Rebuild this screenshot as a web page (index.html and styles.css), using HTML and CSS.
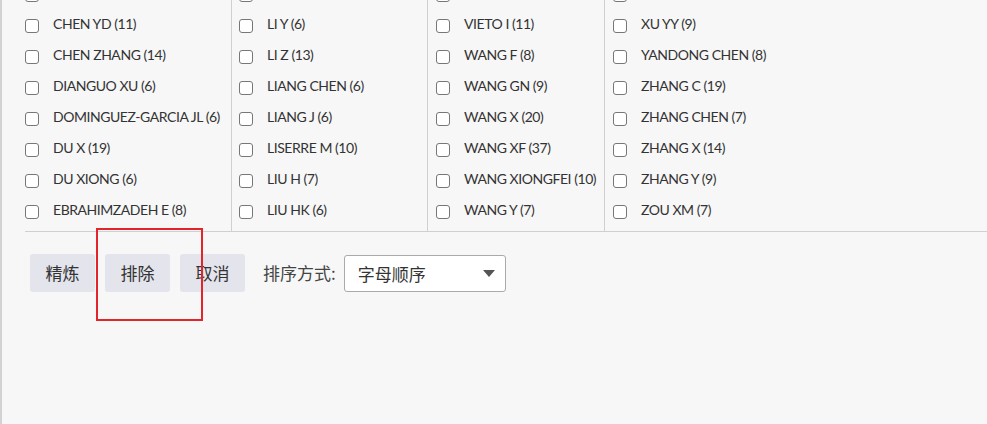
FILE: index.html
```html
<!DOCTYPE html>
<html lang="zh">
<head>
<meta charset="utf-8">
<link rel="stylesheet" href="styles.css">
</head>
<body>
<div class="panel">
  <div class="cols">
    <div class="col c1">
      <label class="row"><span class="box"></span><span class="txt">CHEN XIAO (9)</span></label>
      <label class="row"><span class="box"></span><span class="txt">CHEN YD (11)</span></label>
      <label class="row"><span class="box"></span><span class="txt">CHEN ZHANG (14)</span></label>
      <label class="row"><span class="box"></span><span class="txt">DIANGUO XU (6)</span></label>
      <label class="row"><span class="box"></span><span class="txt">DOMINGUEZ-GARCIA JL (6)</span></label>
      <label class="row"><span class="box"></span><span class="txt">DU X (19)</span></label>
      <label class="row"><span class="box"></span><span class="txt">DU XIONG (6)</span></label>
      <label class="row"><span class="box"></span><span class="txt">EBRAHIMZADEH E (8)</span></label>
    </div>
    <div class="col c2">
      <label class="row"><span class="box"></span><span class="txt">LI X (8)</span></label>
      <label class="row"><span class="box"></span><span class="txt">LI Y (6)</span></label>
      <label class="row"><span class="box"></span><span class="txt">LI Z (13)</span></label>
      <label class="row"><span class="box"></span><span class="txt">LIANG CHEN (6)</span></label>
      <label class="row"><span class="box"></span><span class="txt">LIANG J (6)</span></label>
      <label class="row"><span class="box"></span><span class="txt">LISERRE M (10)</span></label>
      <label class="row"><span class="box"></span><span class="txt">LIU H (7)</span></label>
      <label class="row"><span class="box"></span><span class="txt">LIU HK (6)</span></label>
    </div>
    <div class="col c3">
      <label class="row"><span class="box"></span><span class="txt">TEODORESCU R (12)</span></label>
      <label class="row"><span class="box"></span><span class="txt">VIETO I (11)</span></label>
      <label class="row"><span class="box"></span><span class="txt">WANG F (8)</span></label>
      <label class="row"><span class="box"></span><span class="txt">WANG GN (9)</span></label>
      <label class="row"><span class="box"></span><span class="txt">WANG X (20)</span></label>
      <label class="row"><span class="box"></span><span class="txt">WANG XF (37)</span></label>
      <label class="row"><span class="box"></span><span class="txt">WANG XIONGFEI (10)</span></label>
      <label class="row"><span class="box"></span><span class="txt">WANG Y (7)</span></label>
    </div>
    <div class="col c4">
      <label class="row"><span class="box"></span><span class="txt">XU DIANGUO (7)</span></label>
      <label class="row"><span class="box"></span><span class="txt">XU YY (9)</span></label>
      <label class="row"><span class="box"></span><span class="txt">YANDONG CHEN (8)</span></label>
      <label class="row"><span class="box"></span><span class="txt">ZHANG C (19)</span></label>
      <label class="row"><span class="box"></span><span class="txt">ZHANG CHEN (7)</span></label>
      <label class="row"><span class="box"></span><span class="txt">ZHANG X (14)</span></label>
      <label class="row"><span class="box"></span><span class="txt">ZHANG Y (9)</span></label>
      <label class="row"><span class="box"></span><span class="txt">ZOU XM (7)</span></label>
    </div>
  </div>
  <div class="actions">
    <button class="btn">精炼</button>
    <button class="btn">排除</button>
    <button class="btn">取消</button>
    <span class="sortlabel">排序方式:</span>
    <div class="select"><span>字母顺序</span><span class="caret"></span></div>
  </div>
</div>
<div class="highlight"></div>
</body>
</html>
```

FILE: styles.css
```css
html, body {
  margin: 0;
  padding: 0;
  height: 100%;
  overflow: hidden;
  background: #f7f7f7;
}
body {
  font-family: "Lato", "Noto Sans CJK SC", sans-serif;
  color: #333;
  position: relative;
  box-sizing: border-box;
  border-left: 2px solid #d2d2d2;
}
.panel {
  padding-left: 23px;
}
.cols {
  display: flex;
  margin-top: -21px;
  height: 252px;
  border-bottom: 1px solid #d0d0d0;
}
.col {
  box-sizing: border-box;
  height: 100%;
}
.c1 { width: 206px; }
.c2 { width: 196px; border-left: 1px solid #d0d0d0; padding-left: 7px; }
.c3 { width: 177px; border-left: 1px solid #d0d0d0; padding-left: 8px; }
.c4 { border-left: 1px solid #d0d0d0; padding-left: 8px; flex: 1; }
.row {
  display: flex;
  align-items: flex-start;
  height: 31px;
  gap: 14px;
}
.box {
  width: 14px;
  height: 14px;
  box-sizing: border-box;
  border: 1px solid #777;
  border-radius: 3px;
  background: #fff;
  margin-top: 9px;
  flex: none;
}
.txt {
  font-size: 14px;
  line-height: 28px;
  letter-spacing: -0.45px;
  white-space: nowrap;
}
.actions {
  display: flex;
  align-items: center;
  padding-left: 5px;
  margin-top: 21px;
}
.btn {
  font-family: "Noto Sans CJK SC", sans-serif;
  font-size: 17px;
  color: #333;
  width: 65px;
  height: 38px;
  border: none;
  border-radius: 3px;
  background: #e3e4ec;
  margin-right: 10px;
  padding: 0;
}
.sortlabel {
  font-family: "Noto Sans CJK SC", sans-serif;
  font-size: 17px;
  color: #444;
  margin-left: 8px;
  margin-right: 8px;
}
.select {
  box-sizing: border-box;
  width: 162px;
  height: 37px;
  margin-top: 2px;
  background: #fff;
  border: 1px solid #aaa;
  border-radius: 3px;
  display: flex;
  align-items: center;
  justify-content: space-between;
  padding: 0 10px 0 13px;
  font-family: "Noto Sans CJK SC", sans-serif;
  font-size: 17px;
}
.caret {
  width: 0;
  height: 0;
  border-left: 6.5px solid transparent;
  border-right: 6.5px solid transparent;
  border-top: 7px solid #555;
}
.highlight {
  position: absolute;
  left: 94px;
  top: 228px;
  width: 107px;
  height: 93px;
  box-sizing: border-box;
  border: 2px solid #e3242b;
}
```
